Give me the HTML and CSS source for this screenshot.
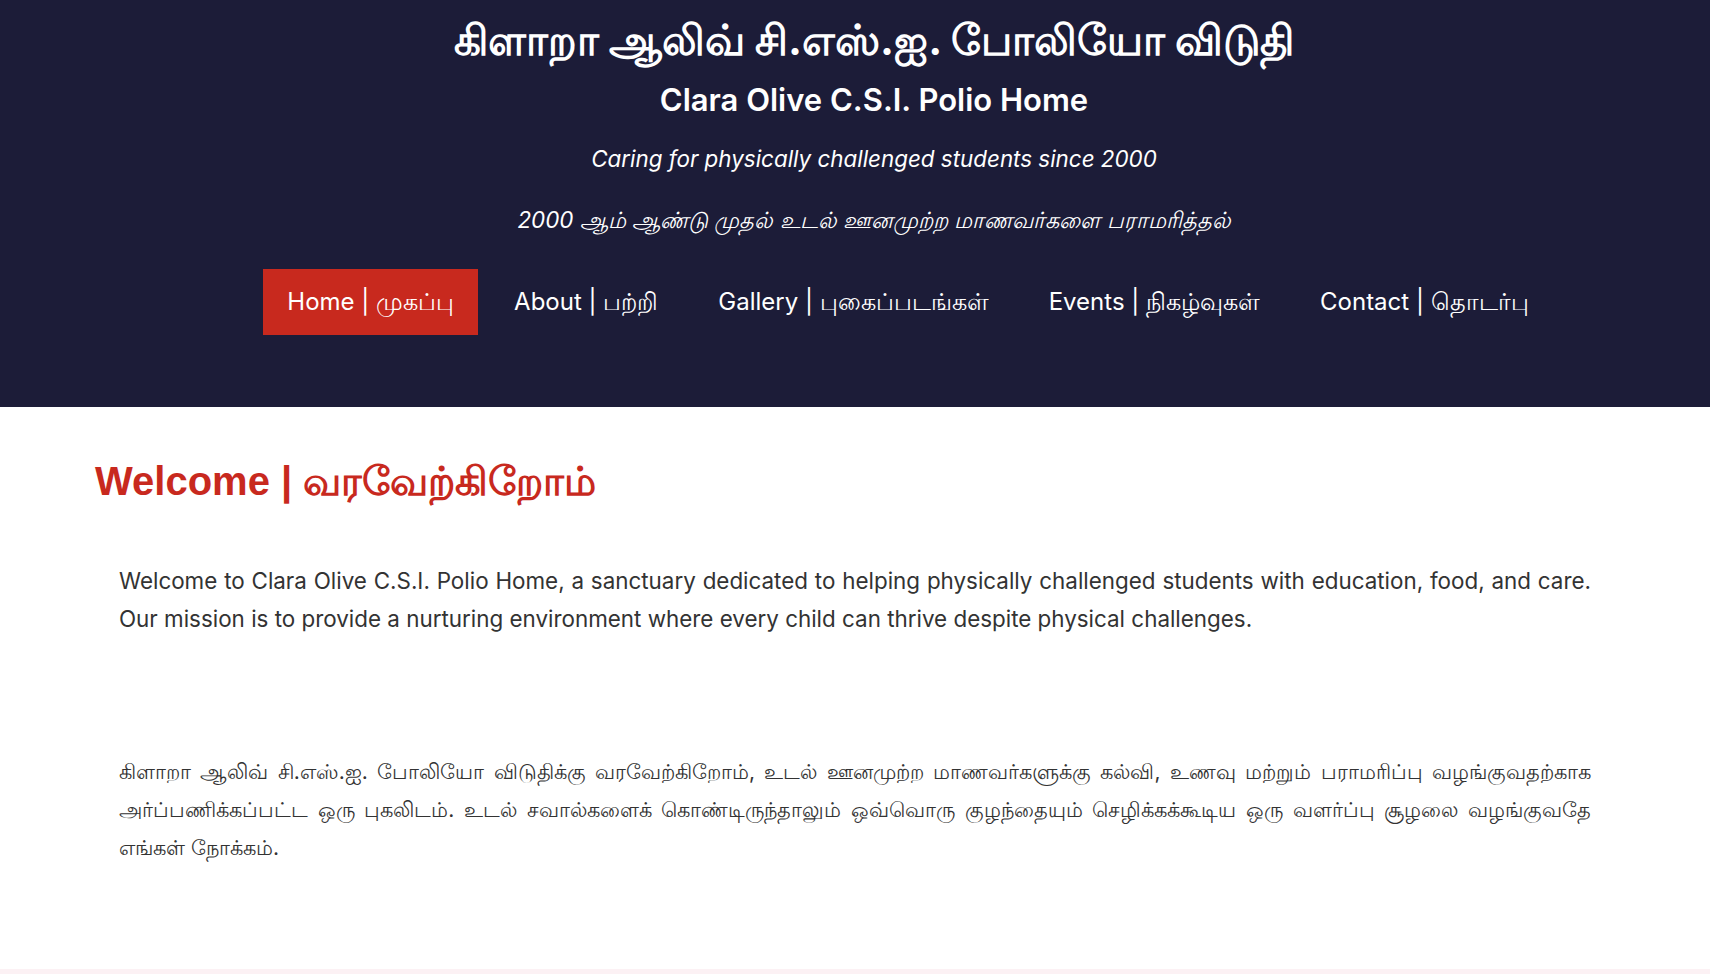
FILE: index.html
```html
<!DOCTYPE html>
<html lang="ta">
<head>
<meta charset="utf-8">
<title>Clara Olive C.S.I. Polio Home</title>
<link rel="stylesheet" href="styles.css">
</head>
<body>
<header class="site-header">
  <h1 class="title-ta">கிளாறா ஆலிவ் சி.எஸ்.ஐ. போலியோ விடுதி</h1>
  <p class="title-en">Clara Olive C.S.I. Polio Home</p>
  <p class="tagline">Caring for physically challenged students since 2000</p>
  <p class="tagline tagline-ta">2000 ஆம் ஆண்டு முதல் உடல் ஊனமுற்ற மாணவர்களை பராமரித்தல்</p>
  <nav class="nav">
    <a class="nav-link active" href="#">Home | முகப்பு</a>
    <a class="nav-link" href="#">About | பற்றி</a>
    <a class="nav-link" href="#">Gallery | புகைப்படங்கள்</a>
    <a class="nav-link" href="#">Events | நிகழ்வுகள்</a>
    <a class="nav-link" href="#">Contact | தொடர்பு</a>
  </nav>
</header>
<main class="content">
  <h2 class="welcome">Welcome | வரவேற்கிறோம்</h2>
  <div class="intro">
    <p class="intro-en">Welcome to Clara Olive C.S.I. Polio Home, a sanctuary dedicated to helping physically challenged students with education, food, and care. Our mission is to provide a nurturing environment where every child can thrive despite physical challenges.</p>
    <p class="intro-ta">கிளாறா ஆலிவ் சி.எஸ்.ஐ. போலியோ விடுதிக்கு வரவேற்கிறோம், உடல் ஊனமுற்ற மாணவர்களுக்கு கல்வி, உணவு மற்றும் பராமரிப்பு வழங்குவதற்காக அர்ப்பணிக்கப்பட்ட ஒரு புகலிடம். உடல் சவால்களைக் கொண்டிருந்தாலும் ஒவ்வொரு குழந்தையும் செழிக்கக்கூடிய ஒரு வளர்ப்பு சூழலை வழங்குவதே<br><span class="last-line">எங்கள் நோக்கம்.</span></p>
  </div>
</main>
</body>
</html>
```
FILE: styles.css
```css
* { box-sizing: border-box; }
html, body { margin: 0; padding: 0; }
body {
  background: #fcf1f4;
  font-family: Inter, "Noto Sans", sans-serif;
  color: #333;
}
.site-header {
  background: #1c1c38;
  color: #fff;
  text-align: center;
  padding: 12px 0 72px 38px;
}
.title-ta {
  margin: 0;
  font-size: 42px;
  font-weight: 700;
  line-height: 56px;
}
.title-en {
  margin: 8px 0 0;
  font-size: 31px;
  font-weight: 600;
  line-height: 48px;
}
.tagline {
  margin: 19px 0 0;
  font-size: 22.4px;
  font-style: italic;
  line-height: 32px;
}
.tagline-ta { margin-top: 29px; }
.nav {
  display: flex;
  justify-content: center;
  gap: 12px;
  margin-top: 33px;
  padding-left: 68px;
}
.nav-link {
  color: #fff;
  text-decoration: none;
  font-size: 24px;
  line-height: 34px;
  padding: 16px 24px;
}
.nav-link.active { background: #c8291e; }
.content {
  background: #fff;
  padding: 49px 95px 60px;
  min-height: 562px;
}
.welcome {
  margin: 0;
  color: #c8291e;
  font-family: "Liberation Sans", Arial, sans-serif;
  font-size: 40px;
  font-weight: 700;
  line-height: 50px;
}
.intro { padding: 0 24px; }
.intro p {
  margin: 0;
  font-size: 22.4px;
  line-height: 38px;
  text-align: justify;
}
.intro .intro-en { margin-top: 56px; }
.intro .intro-ta {
  margin-top: 115px;
  font-size: 21px;
  text-align-last: justify;
}
.last-line { display: inline-block; }
```
